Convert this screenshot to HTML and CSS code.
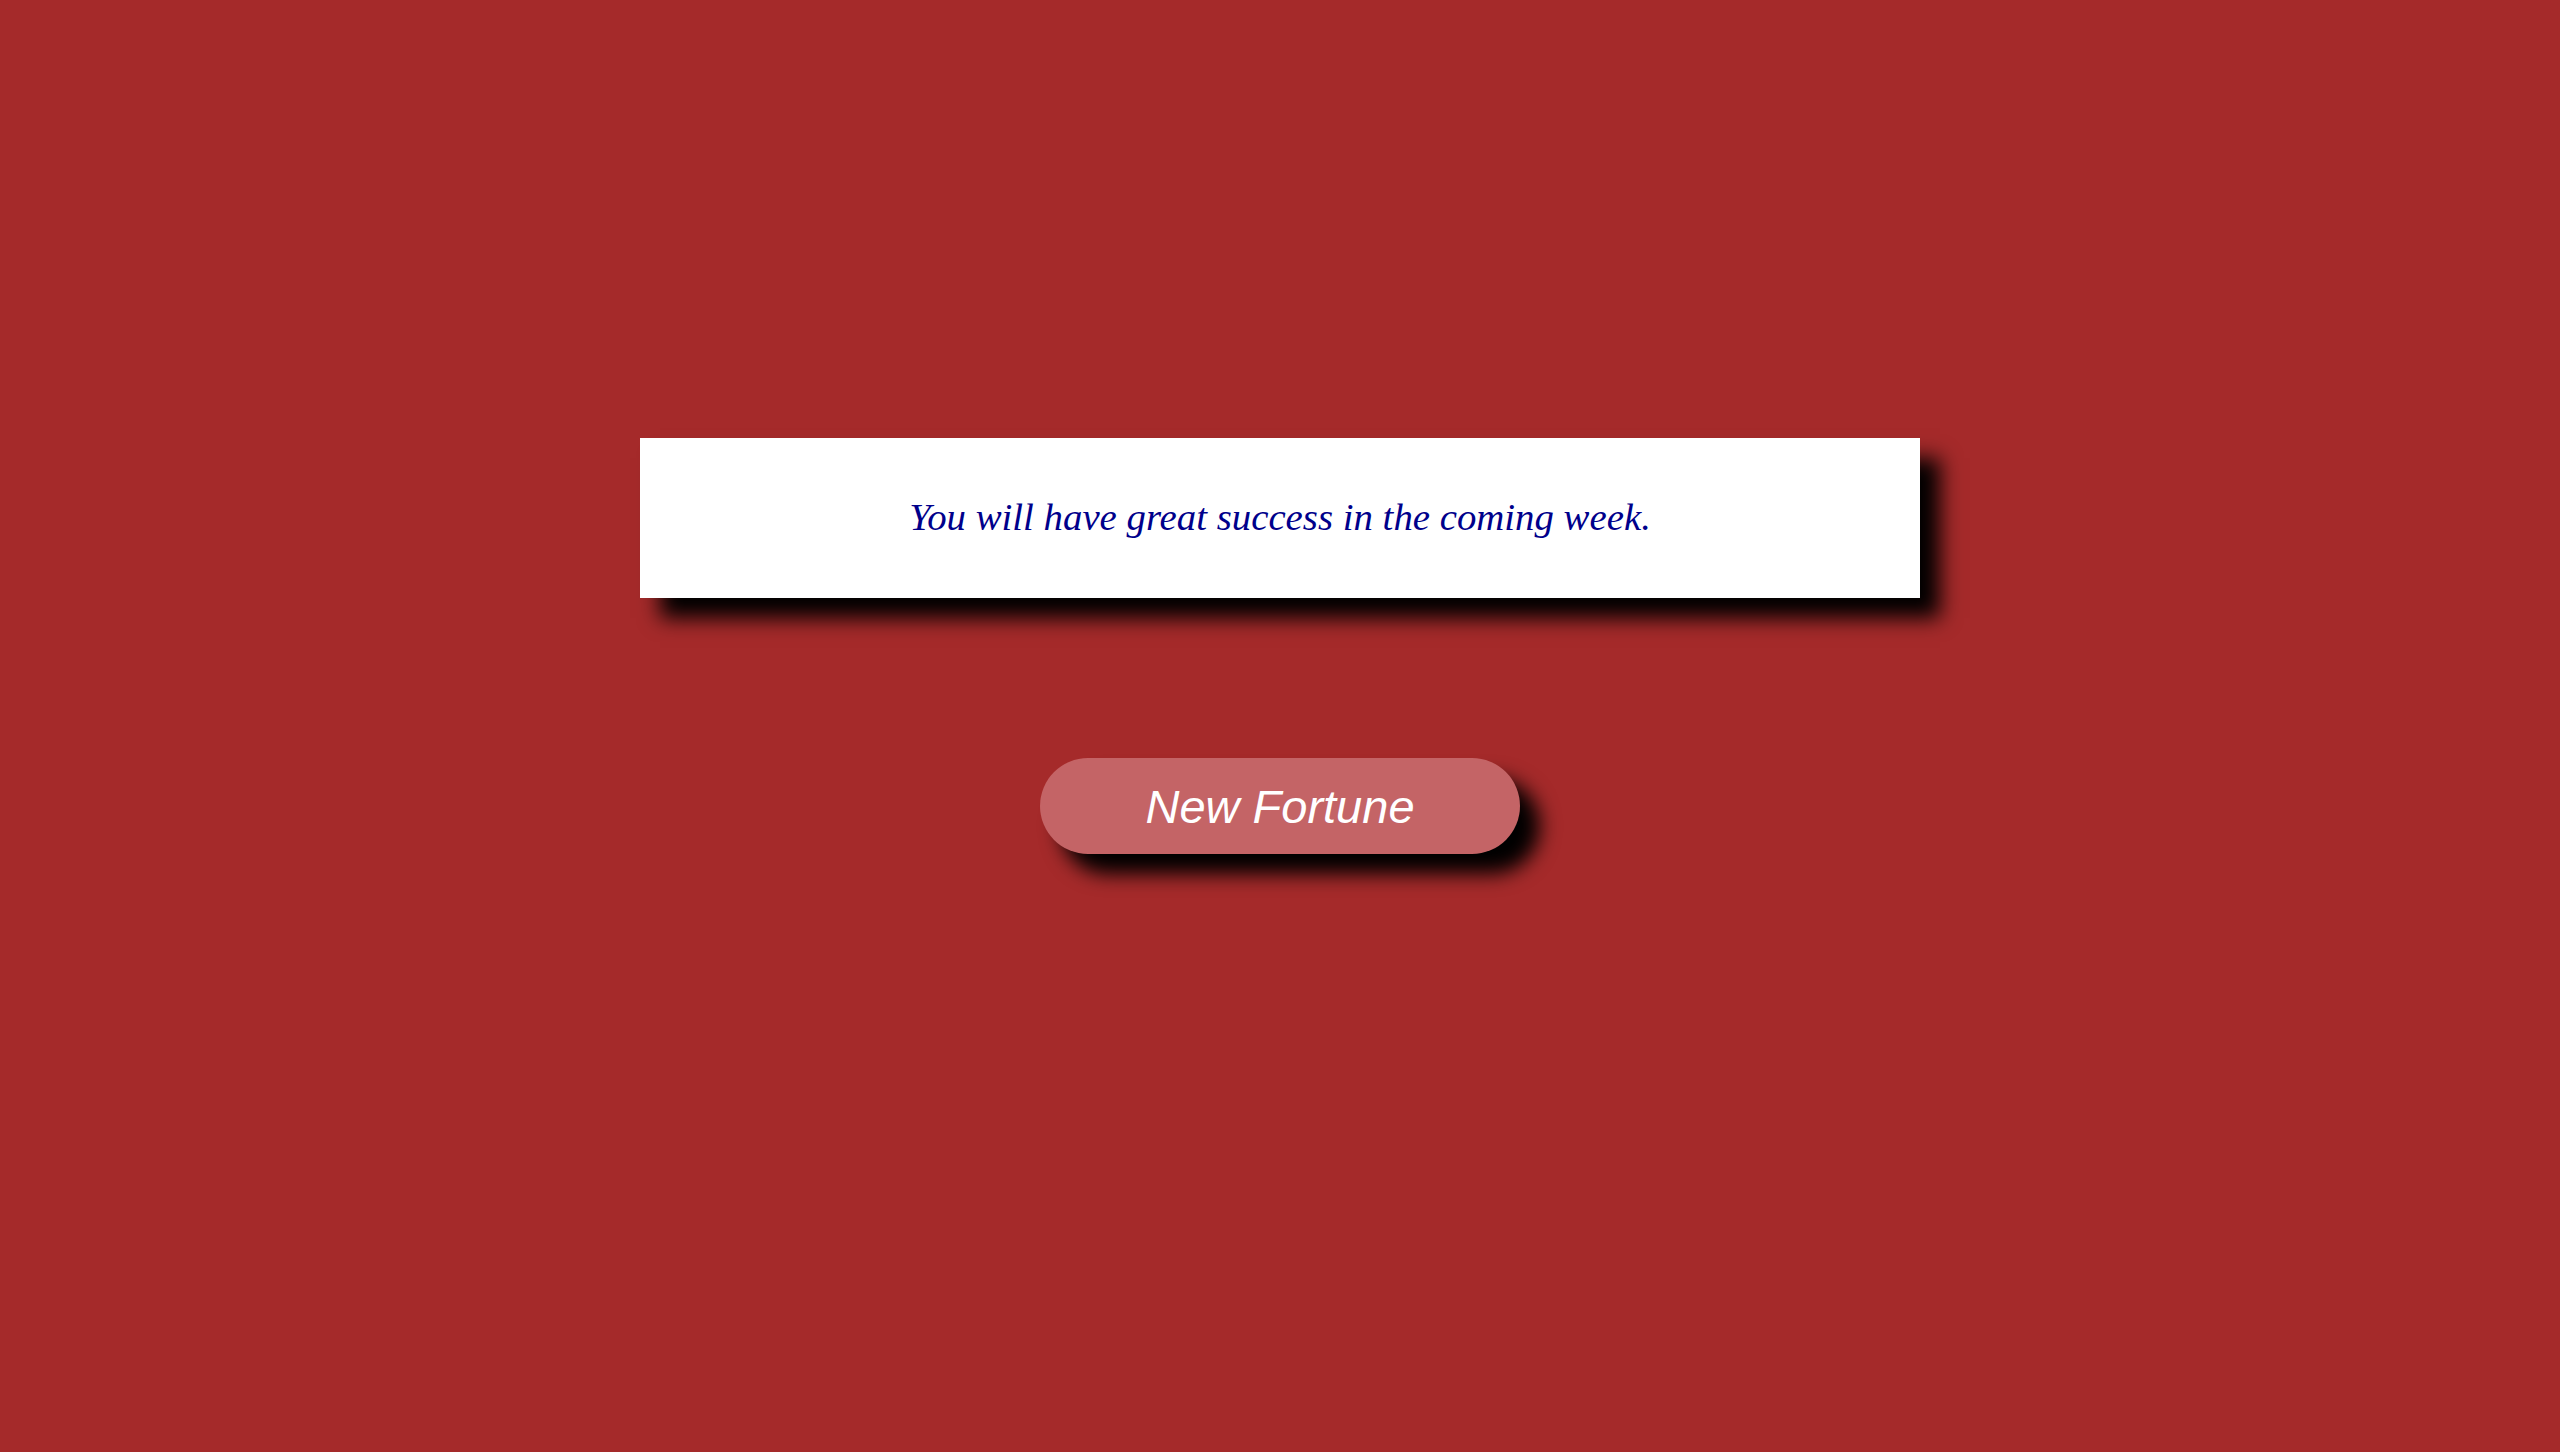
FILE: index.html
```html
<!DOCTYPE html>
<html lang="en">
<head>
<meta charset="utf-8">
<title>Fortune</title>
<link rel="stylesheet" href="styles.css">
</head>
<body>
<main class="page">
  <section class="fortune-card">
    <p class="fortune-text">You will have great success in the coming week.</p>
  </section>
  <button class="fortune-button" type="button">New Fortune</button>
</main>
</body>
</html>
```
FILE: styles.css
```css
html, body {
  margin: 0;
  padding: 0;
  background: #a52a2a;
  height: 100%;
}
.page {
  display: flex;
  flex-direction: column;
  align-items: center;
  padding-top: 438px;
  gap: 160px;
}
.fortune-card {
  box-sizing: border-box;
  width: 1280px;
  height: 160px;
  padding-bottom: 4px;
  background: #fff;
  display: flex;
  align-items: center;
  justify-content: center;
  box-shadow: 20px 20px 20px #000;
}
.fortune-text {
  margin: 0;
  font-family: "Liberation Serif", "Times New Roman", serif;
  font-style: italic;
  font-size: 38.8px;
  color: #00008b;
}
.fortune-button {
  width: 480px;
  height: 96px;
  border: none;
  border-radius: 48px;
  background: #c46466;
  color: #fff;
  font-family: "Liberation Sans", Arial, sans-serif;
  font-style: italic;
  font-size: 47px;
  box-shadow: 20px 20px 20px #000;
  padding: 0;
}
```
